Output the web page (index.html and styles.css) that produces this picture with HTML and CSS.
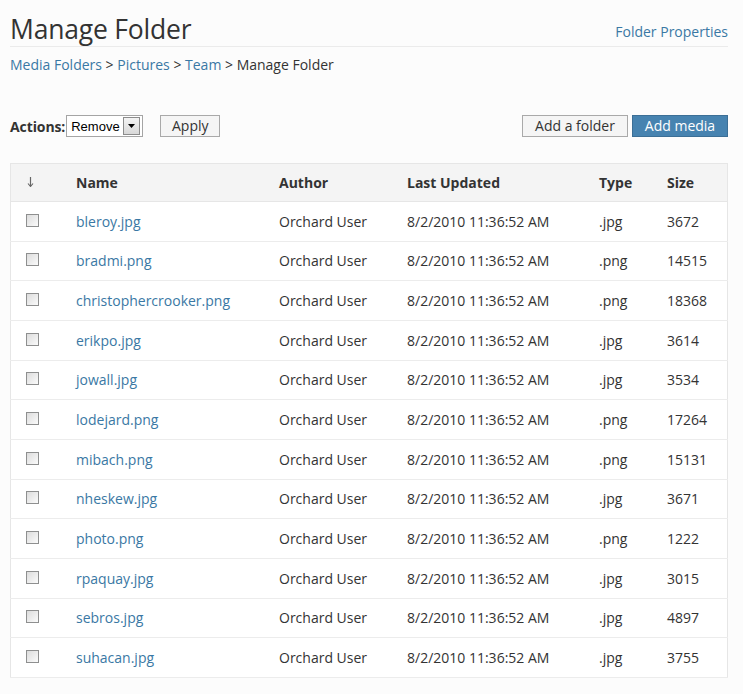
FILE: index.html
```html
<!DOCTYPE html>
<html>
<head>
<meta charset="utf-8">
<link rel="stylesheet" href="styles.css">
</head>
<body>
<div class="page">
  <div class="titlebar">
    <h1 class="title">Manage Folder</h1>
    <a class="link props" href="#">Folder Properties</a>
  </div>
  <div class="crumbs">
    <a class="link" href="#">Media Folders</a> &gt; <a class="link" href="#">Pictures</a> &gt; <a class="link" href="#">Team</a> &gt; Manage Folder
  </div>
  <div class="actions">
    <div class="bulk">
      <label class="act-label">Actions:</label>
      <span class="select"><span class="select-text">Remove</span><span class="select-btn"><svg width="7" height="4" viewBox="0 0 7 4"><path d="M0 0H7L3.5 4Z" fill="#000"/></svg></span></span>
      <button class="btn apply">Apply</button>
    </div>
    <div class="primary">
      <button class="btn folder">Add a folder</button>
      <button class="btn blue">Add media</button>
    </div>
  </div>
  <table class="grid">
    <thead>
      <tr><th class="c-check"><svg class="sort" width="7" height="10" viewBox="0 0 7 10"><path d="M3.5 0V9" stroke="#666" stroke-width="1.2"/><path d="M1 6.5L3.5 9.5L6 6.5" fill="none" stroke="#666" stroke-width="1.1"/></svg></th><th class="c-name">Name</th><th class="c-author">Author</th><th class="c-date">Last Updated</th><th class="c-type">Type</th><th class="c-size">Size</th></tr>
    </thead>
    <tbody>
      <tr><td class="c-check"><input type="checkbox" class="cb"></td><td><a class="link" href="#">bleroy.jpg</a></td><td>Orchard User</td><td>8/2/2010 11:36:52 AM</td><td>.jpg</td><td>3672</td></tr>
      <tr><td class="c-check"><input type="checkbox" class="cb"></td><td><a class="link" href="#">bradmi.png</a></td><td>Orchard User</td><td>8/2/2010 11:36:52 AM</td><td>.png</td><td>14515</td></tr>
      <tr><td class="c-check"><input type="checkbox" class="cb"></td><td><a class="link" href="#">christophercrooker.png</a></td><td>Orchard User</td><td>8/2/2010 11:36:52 AM</td><td>.png</td><td>18368</td></tr>
      <tr><td class="c-check"><input type="checkbox" class="cb"></td><td><a class="link" href="#">erikpo.jpg</a></td><td>Orchard User</td><td>8/2/2010 11:36:52 AM</td><td>.jpg</td><td>3614</td></tr>
      <tr><td class="c-check"><input type="checkbox" class="cb"></td><td><a class="link" href="#">jowall.jpg</a></td><td>Orchard User</td><td>8/2/2010 11:36:52 AM</td><td>.jpg</td><td>3534</td></tr>
      <tr><td class="c-check"><input type="checkbox" class="cb"></td><td><a class="link" href="#">lodejard.png</a></td><td>Orchard User</td><td>8/2/2010 11:36:52 AM</td><td>.png</td><td>17264</td></tr>
      <tr><td class="c-check"><input type="checkbox" class="cb"></td><td><a class="link" href="#">mibach.png</a></td><td>Orchard User</td><td>8/2/2010 11:36:52 AM</td><td>.png</td><td>15131</td></tr>
      <tr><td class="c-check"><input type="checkbox" class="cb"></td><td><a class="link" href="#">nheskew.jpg</a></td><td>Orchard User</td><td>8/2/2010 11:36:52 AM</td><td>.jpg</td><td>3671</td></tr>
      <tr><td class="c-check"><input type="checkbox" class="cb"></td><td><a class="link" href="#">photo.png</a></td><td>Orchard User</td><td>8/2/2010 11:36:52 AM</td><td>.png</td><td>1222</td></tr>
      <tr><td class="c-check"><input type="checkbox" class="cb"></td><td><a class="link" href="#">rpaquay.jpg</a></td><td>Orchard User</td><td>8/2/2010 11:36:52 AM</td><td>.jpg</td><td>3015</td></tr>
      <tr><td class="c-check"><input type="checkbox" class="cb"></td><td><a class="link" href="#">sebros.jpg</a></td><td>Orchard User</td><td>8/2/2010 11:36:52 AM</td><td>.jpg</td><td>4897</td></tr>
      <tr><td class="c-check"><input type="checkbox" class="cb"></td><td><a class="link" href="#">suhacan.jpg</a></td><td>Orchard User</td><td>8/2/2010 11:36:52 AM</td><td>.jpg</td><td>3755</td></tr>
    </tbody>
  </table>
</div>
</body>
</html>
```

FILE: styles.css
```css
html, body {
  margin: 0;
  padding: 0;
  background: #fcfcfc;
}
body {
  font-family: "Open Sans", "Noto Sans", sans-serif;
  font-size: 14px;
  color: #333;
}
.page {
  padding: 0 15px 0 10px;
}
.link {
  color: #3a78a4;
  text-decoration: none;
}
.titlebar {
  display: flex;
  justify-content: space-between;
  align-items: flex-end;
  border-bottom: 1px solid #ebebeb;
  padding-top: 12px;
  height: 34px;
}
.title {
  margin: 0;
  font-weight: 400;
  font-size: 26.5px;
  line-height: 34px;
  color: #333;
  letter-spacing: -0.2px;
}
.props {
  margin-bottom: 5px;
}
.crumbs {
  margin-top: 8px;
  line-height: 20px;
  color: #333;
}
.actions {
  display: flex;
  justify-content: space-between;
  align-items: center;
  margin-top: 39px;
  height: 24px;
}
.bulk, .primary {
  display: flex;
  align-items: center;
}
.act-label {
  font-weight: 700;
  color: #333;
  margin-right: 1px;
  letter-spacing: -0.1px;
}
.select {
  display: inline-flex;
  align-items: center;
  justify-content: space-between;
  box-sizing: border-box;
  height: 22px;
  width: 77px;
  border: 1px solid #a5a5a5;
  background: #fff;
  padding: 0 2px 0 4px;
  font-family: "Liberation Sans", Arial, sans-serif;
  font-size: 13px;
  color: #000;
}
.select-btn {
  display: inline-flex;
  align-items: center;
  justify-content: center;
  width: 15px;
  height: 16px;
  border: 1px solid #8c8c8c;
  background: linear-gradient(#f4f4f4, #d8d8d8);
}
.btn {
  font-family: "Open Sans", "Noto Sans", sans-serif;
  font-size: 14px;
  color: #333;
  background: #f5f5f5;
  border: 1px solid #a9a9a9;
  height: 22px;
  padding: 0;
  line-height: 20px;
  margin: 0;
  cursor: pointer;
}
.apply {
  margin-left: 17px;
  width: 60px;
}
.folder {
  width: 106px;
}
.primary .btn + .btn {
  margin-left: 4px;
}
.blue {
  background: #4783b0;
  border-color: #3c6f96;
  color: #fff;
  width: 96px;
}
.grid {
  margin-top: 25px;
  width: 100%;
  border-collapse: collapse;
  background: #fff;
  border: 1px solid #e6e6e6;
}
.grid th {
  background: #f4f4f4;
  font-weight: 700;
  text-align: left;
  height: 37px;
  padding: 0;
  border-bottom: 1px solid #e6e6e6;
  color: #333;
}
.grid td {
  height: 38.67px;
  padding: 0;
  border-bottom: 1px solid #ececec;
  color: #333;
}
.grid th.c-check {
  padding-left: 16px;
  width: 49px;
}
.sort {
  display: block;
  position: relative;
  top: -1px;
}
.grid td.c-check {
  padding-left: 15px;
}
.c-name { width: 203px; }
.c-author { width: 128px; }
.c-date { width: 192px; }
.c-type { width: 68px; }
.cb {
  appearance: none;
  -webkit-appearance: none;
  width: 13px;
  height: 13px;
  margin: 0;
  display: block;
  border: 1px solid #8e8f8f;
  background: linear-gradient(135deg, #dcdcdc, #fbfbfb);
  position: relative;
  top: -1px;
}
```
